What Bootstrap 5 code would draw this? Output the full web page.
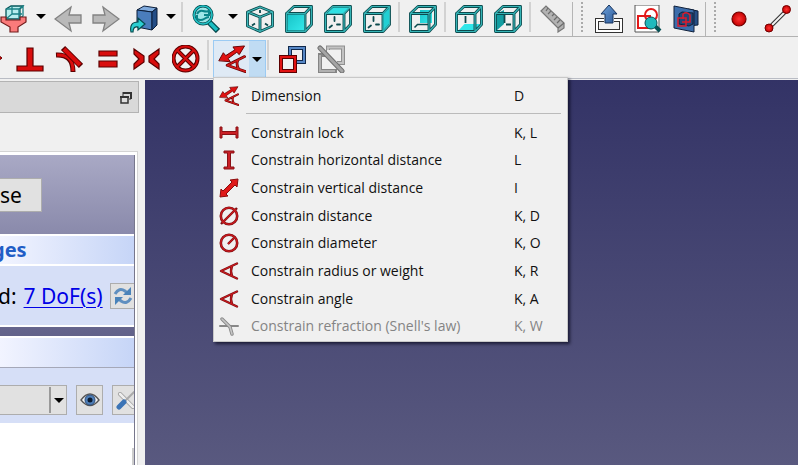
<!DOCTYPE html>
<html lang="en">
<head>
<meta charset="utf-8">
<meta name="viewport" content="width=device-width, initial-scale=1">
<title>Sketcher constraints</title>
<link href="https://cdn.jsdelivr.net/npm/bootstrap@5.3.0/dist/css/bootstrap.min.css" rel="stylesheet">
<style>
body{background:#f0f0f0;color:#000;font-family:"Open Sans","Noto Sans",sans-serif;font-size:14px}
svg{display:block;flex:none}
button{border:0;background:none;padding:0;color:inherit}
.bar-a{height:37px;border-bottom:1px solid #b2b2b2;padding-top:2px}
.bar-b{height:42px;border-bottom:1px solid #b9bcc4;padding-top:3px}
.tool-gap{gap:11px}
.nav-gap{gap:10px}
.b-cells{height:37px}
.part-icon{margin-right:12px}
.arrow-btn{width:18px;height:28px;margin:0 4px;display:flex;align-items:center;justify-content:center}
.arrow-btn::after,.tri::after{content:"";border:5px solid transparent;border-top-color:#000;border-bottom:0}
.rule-v{width:18px;height:30px;padding-left:7px}
.rule-v::before{content:"";display:block;width:2px;height:30px;background:#d2d2d2}
.rule-tight{width:12px;padding-left:1px}
.rule-mid{width:13px}
.grip{width:2px;height:30px;border-left:2px dotted #aaa}
.edge{width:1px;height:34px;background:#b5b5b5}
.split-on{width:53px;height:38px;background:#dfeaf5;border:1px solid #9ccbf3}
.split-on .drop-part{width:16px;background:#c0dcf3}
.cons-menu{width:355px;top:100%;left:-1px;margin:0;padding:4px 4px 1px;border:1px solid #c8c8c8;border-radius:0;background:#f0f0f0;box-shadow:2px 2px 3px rgba(0,0,20,.65);font-size:14px}
.cons-menu .dropdown-item{display:flex;align-items:center;gap:12px;padding:0 10px 0 1px;line-height:20px;color:#111}
.cons-menu .dropdown-item:disabled{color:#848484}
.cons-menu .key{width:39px}
.cons-menu .top-item{height:28px}
.cons-menu .dropdown-divider{margin:3px 2px 5px 28px;border-color:#bbb}
.cons-list{display:grid;grid-auto-rows:1fr;min-height:221px}
.work{min-height:386px}
.dock{width:145px;padding-top:2px;font-family:"Noto Sans","Open Sans",sans-serif;font-size:21px;line-height:24px;white-space:nowrap}
.dock-title{height:32px;margin-right:6px;background:#d9d9d9;border:1px solid #b3b3b3;border-left:0;padding-right:6px}
.dock-frame{margin:38px 7px 0 0;border:1px solid #d4d4d4;border-left:0;border-bottom:0;padding:3px 2px 0 0;background:#fff}
.task{border-right:1px solid #77778c;background:linear-gradient(#a9a9c5,#62628a 180px);overflow:hidden}
.close-row{height:79px;padding-top:23px}
.close-btn{width:42px;height:34px;background:#e1e1e1;border:1px solid #adadad;border-left:0;text-align:left}
.sec-head{height:32px;border-top:2px solid #fff;border-bottom:2px solid #fff;background:linear-gradient(90deg,#f2f4ff,#c6d5f7);color:#215dc6;font-size:20px;font-weight:700;line-height:28px}
.sec-head span{margin-left:-8px}
.sec-two{margin-top:9px;border-bottom:1px solid #a5a8b8}
.sec-body{background:#d6dff7;border-bottom:2px solid #fff}
.dof{height:61px;gap:7px}
.dof span{margin-left:-2px}
.dof a{color:#0000e6;text-underline-offset:3px;text-decoration-thickness:1px}
.pad-btn{width:27px;height:30px;border:1px solid #adadad;background:#e1e1e1;flex:none;display:flex;align-items:center;justify-content:center}
.pad-low{height:26px}
.filter-row{height:57px;gap:9px;padding-bottom:4px}
.combo{width:67px;height:30px;border:1px solid #adadad;border-left:0;background:#e1e1e1;flex:none}
.combo .tri{width:17px;height:26px;border-left:2px solid #999}
.elements{min-height:41px;background:#fff;padding-top:23px}
.elements::after{content:"";display:block;width:2px;min-height:18px;background:#cdcdcd;margin-left:auto}
.view3d{background:linear-gradient(#333366,#59597f);border-top:1px solid #f0f0f0}
</style>
<script src="https://cdn.jsdelivr.net/npm/bootstrap@5.3.0/dist/js/bootstrap.bundle.min.js"></script>
</head>
<body>
<svg width="0" height="0" class="position-absolute" aria-hidden="true">
<defs>
<linearGradient id="gTeal" x2="1" y2="1"><stop stop-color="#18c4c8"/><stop offset="1" stop-color="#34e8ea"/></linearGradient>
<linearGradient id="gBlue" x2="1" y2="1"><stop stop-color="#6fa3dc"/><stop offset="1" stop-color="#2a5796"/></linearGradient>
<radialGradient id="gRed"><stop stop-color="#f33"/><stop offset="1" stop-color="#c40000"/></radialGradient>
<path id="wire" d="M1.500 8.500H20V26.500H1.500ZM1.500 8.500 9 1.500H26.500V19.500L20 26.500M20 8.500 26.500 1.500"/>
<g id="frame" fill="none" stroke-linejoin="round"><use href="#wire" stroke="#0b4a4d" stroke-width="2.9"/><use href="#wire" stroke="#35b4b6" stroke-width="1.2"/></g>
<g id="ticks" fill="none" stroke="#0b4a4d" stroke-width="1.8" stroke-linecap="round"><path d="M10.500 12V16M5.500 22.500 8 20.500M13 19.500H16"/></g>
<g id="ang" fill="none" stroke-linecap="round" stroke-linejoin="round"><path d="M18 2.500 2 10 18 17.500M13 5Q11 10 13 15" stroke="#7a0e10" stroke-width="2.4"/><path d="M18 2.500 2 10 18 17.500M13 5Q11 10 13 15" stroke="#c8191e" stroke-width="1.2"/></g>
<g id="dimen" stroke-linejoin="round" stroke-linecap="round"><path d="M0.500 16 5 8 7.500 11 17 5 15 2 27 1 21.500 10 19 7.500 10 14 12 17Z" fill="#e01212" stroke="#650000"/><g fill="none"><path d="M27 12 9 21 28 27.500M20 16Q18 20 21 25" stroke="#650000" stroke-width="2.900"/><path d="M27 12 9 21 28 27.500M20 16Q18 20 21 25" stroke="#d31c1c" stroke-width="1.500"/></g></g>
</defs>
</svg>

<header>
<div class="bar-a d-flex" role="toolbar" aria-label="View">
  <button aria-label="Selection filter"><svg width="28" height="28"><path d="M6 4 11 1H23L20 4V14H6Z" fill="#b7eeee" stroke="#06565a" stroke-width="1.3"/><path d="M6 4H19V14M19 4 23 1V11L19 14M12 1V9L6 14M12 9H22" fill="none" stroke="#1a8185" stroke-width="1.3"/><path d="M1 12H6V15H20V12H26V17L18 22V27H10V22L1 17Z" fill="#fa7b7b" stroke="#701c1c" stroke-width="1.2"/></svg></button>
  <button class="arrow-btn" aria-label="Filter options"></button>
  <div class="d-flex nav-gap">
    <button aria-label="Back"><svg width="28" height="28"><path d="M1 14 17 2 15 10H27V18H15L17 26Z" fill="#b9b9b9" stroke="#828282" stroke-width="1.3"/></svg></button>
    <button aria-label="Forward"><svg width="28" height="28"><path d="M27 14 11 2 13 10H1V18H13L11 26Z" fill="#b9b9b9" stroke="#828282" stroke-width="1.3"/></svg></button>
    <button aria-label="Go to linked object"><svg width="28" height="28"><path d="M7 5 14 1 27 3 22 7Z" fill="#7faadd" stroke="#0b1d38"/><path d="M7 5 22 7V25L7 22Z" fill="#4a7dbc" stroke="#0b1d38"/><path d="M22 7 27 3V20L22 25Z" fill="#234d86" stroke="#0b1d38"/><path d="M1 27Q-1 17 8 17V13L15 19 8 25V22Q3 21 3 27Z" fill="#2ccfd2" stroke="#064a4d" stroke-width="1.2"/></svg></button>
  </div>
  <button class="arrow-btn me-0" aria-label="Link options"></button>
  <div class="rule-v rule-tight"></div>
  <button aria-label="Fit all"><svg width="28" height="28"><path d="M17 17 26 26" stroke="#06494d" stroke-width="6"/><path d="M17 17 25 25" stroke="#1dbfc3" stroke-width="3.5"/><circle cx="11" cy="10" r="9" fill="#9ee6e8" stroke="#06494d" stroke-width="3"/><circle cx="11" cy="10" r="9" fill="none" stroke="#22c3c7" stroke-width="1.6"/><path d="M5 9Q7 5 11 6T17 6V10H12M5 10V14Q9 16 12 14T17 12" fill="none" stroke="#0a858a" stroke-width="2"/></svg></button>
  <button class="arrow-btn" aria-label="Fit options"></button>
  <div class="d-flex tool-gap">
    <button aria-label="Isometric"><svg width="28" height="28" fill="none" stroke-linejoin="round"><path d="M14 2 26.500 7V21L14 26.500 1.500 21V7ZM1.500 7 14 12 26.500 7M14 12V26" stroke="#0b4a4d" stroke-width="2.9"/><path d="M14 2 26.500 7V21L14 26.500 1.500 21V7ZM1.500 7 14 12 26.500 7M14 12V26" stroke="#3fbbbd" stroke-width="1.2"/><path d="M6 20.500 9 18.500M19 18.500 22 20.500M14 5V8" stroke="#0b4a4d" stroke-width="1.800"/></svg></button>
    <button aria-label="Front"><svg width="28" height="28"><use href="#frame"/><path d="M2.500 9.500H19V25.500H2.500Z" fill="url(#gTeal)"/></svg></button>
    <button aria-label="Top"><svg width="28" height="28"><use href="#frame"/><use href="#ticks"/><path d="M3.500 8 9.500 2.500H25L19.500 8Z" fill="#2fe0e3"/></svg></button>
    <button aria-label="Right"><svg width="28" height="28"><use href="#ticks"/><use href="#frame"/><path d="M20.500 9 26 3.500V19L20.500 25Z" fill="#22cfd3"/></svg></button>
  </div>
  <div class="rule-v"></div>
  <button aria-label="Rear"><svg width="28" height="28"><path d="M11 5H23V18H11Z" fill="url(#gTeal)"/><path d="M5.500 22.500 8.500 19.500H19" fill="none" stroke="#0b4a4d" stroke-width="1.500"/><use href="#frame"/></svg></button>
  <div class="rule-v"></div>
  <div class="d-flex tool-gap">
    <button aria-label="Bottom"><svg width="28" height="28"><path d="M3 26 9.500 19H25L20 26Z" fill="#2fe6e9"/><path d="M10.500 11V18" stroke="#0b4a4d" stroke-width="1.800" fill="none"/><use href="#frame"/></svg></button>
    <button aria-label="Left"><svg width="28" height="28"><path d="M2 9 10 5V19L2 26Z" fill="#129da1"/><path d="M10.500 10V18M12 19.500H17" stroke="#0b4a4d" stroke-width="1.800"/><use href="#frame"/></svg></button>
  </div>
  <div class="rule-v"></div>
  <button aria-label="Measure"><svg width="28" height="28"><path d="M1 6 6 1 24 18V23L18 27V23Z" fill="#b2b2b2" stroke="#777" stroke-width="1.2"/><path d="M18 23 24 18M8 3 6 6M11 6 8 9M14 9 12 11M17 12 14 15M20 15 17 18" stroke="#6c6c6c" stroke-width="1.2"/></svg></button>
  <div class="edge ms-1 me-1"></div><div class="grip ms-1 me-1"></div>
  <div class="d-flex tool-gap ms-2">
    <button aria-label="Leave sketch"><svg width="28" height="28"><path d="M9 15H2V26H26V15H19" fill="none" stroke="#333" stroke-width="4"/><path d="M9 15H2V26H26V15H19" fill="none" stroke="#fff" stroke-width="2"/><path d="M14 0 22 9H18V18H10V9H6Z" fill="url(#gBlue)" stroke="#17335c"/></svg></button>
    <button aria-label="View sketch"><svg width="28" height="28"><path d="M1 0H25V27H1Z" fill="#fff" stroke="#555"/><path d="M4 11H16V23H4Z" fill="none" stroke="#e21a1a" stroke-width="2"/><circle cx="17" cy="10" r="6" fill="none" stroke="#e21a1a" stroke-width="2"/><path d="M20 20 26 26" stroke="#075256" stroke-width="4"/><circle cx="17" cy="18" r="6" fill="#20b9bd" stroke="#075256"/></svg></button>
    <button aria-label="View section"><svg width="28" height="28"><path d="M15 4 25 6V20L15 21Z" fill="#264f86" stroke="#10213b"/><path d="M1 1 21 5V27L1 23Z" fill="#3c6dab" stroke="#10213b"/><path d="M6 9 9 7 20 8V19L16 21 6 19Z" fill="#234777" stroke="#10213b"/><path d="M5 13H13V21H5ZM10 14V9Q14 6 17 10V17H9" fill="none" stroke="#dc1b2d" stroke-width="1.500"/></svg></button>
  </div>
  <div class="edge ms-1 me-1"></div><div class="grip ms-1 me-2"></div>
  <div class="d-flex tool-gap">
    <button aria-label="Point"><svg width="28" height="28"><circle cx="15" cy="14" r="7" fill="url(#gRed)" stroke="#720000" stroke-width="1.2"/></svg></button>
    <button aria-label="Line"><svg width="28" height="28"><path d="M6 23 24 5" stroke="#333" stroke-width="4"/><path d="M6 23 24 5" stroke="#f5f5f5" stroke-width="2"/><circle cx="6" cy="23" r="4" fill="url(#gRed)" stroke="#720000"/><circle cx="23.500" cy="4.500" r="4" fill="url(#gRed)" stroke="#720000"/></svg></button>
  </div>
</div>

<div class="bar-b d-flex" role="toolbar" aria-label="Constraints">
  <svg class="part-icon" width="4" height="37"><path d="M-3 14 2 18-3 22Z" fill="#d40000" stroke="#600"/></svg>
  <div class="d-flex tool-gap align-items-center b-cells">
    <button aria-label="Perpendicular"><svg width="28" height="28"><path d="M11 3H17V21H27V26H1V21H11Z" fill="#d90d0d" stroke="#5c0000" stroke-width="1.2"/></svg></button>
    <button aria-label="Tangent"><svg width="28" height="28" fill="none"><path d="M1 10Q18 9 18 27" stroke="#5c0000" stroke-width="5"/><path d="M2 10Q18 9 18 26" stroke="#d90d0d" stroke-width="3"/><path d="M8 3 26 21" stroke="#5c0000" stroke-width="6"/><path d="M9 4 25 20" stroke="#d90d0d" stroke-width="4"/></svg></button>
    <button aria-label="Equal"><svg width="28" height="28" fill="#d90d0d" stroke="#5c0000" stroke-width="1.2"><path d="M5 6H23V11H5ZM5 16H23V22H5Z"/></svg></button>
    <button aria-label="Symmetric"><svg width="28" height="28" fill="#d90d0d" stroke="#5c0000" stroke-width="1.2"><path d="M1 4 11 11V17L1 24V19L6 14 1 9ZM26 4 16 11V17L26 24V19L21 14 26 9Z"/></svg></button>
    <button aria-label="Block"><svg width="28" height="28" fill="none"><path d="M5 5 22 22M22 5 5 22" stroke="#5c0000" stroke-width="4"/><circle cx="13.500" cy="13.500" r="12" stroke="#5c0000" stroke-width="4"/><circle cx="13.500" cy="13.500" r="12" stroke="#d90d0d" stroke-width="2"/><path d="M5 5 22 22M22 5 5 22" stroke="#d90d0d" stroke-width="2"/></svg></button>
  </div>
  <div class="rule-v rule-mid"></div>
  <div class="dropdown split-on d-flex">
    <button class="flex-grow-1" aria-label="Dimension tool"><svg class="mx-auto" width="28" height="28" viewBox="0 0 28 29"><use href="#dimen"/></svg></button>
    <button class="drop-part tri d-flex align-items-center justify-content-center" data-bs-toggle="dropdown" aria-expanded="true" aria-label="Dimension menu"></button>
    <div class="dropdown-menu cons-menu show">
      <button class="dropdown-item top-item"><svg width="20" height="20" viewBox="0 0 28 29"><use href="#dimen"/></svg><span class="flex-grow-1">Dimension</span><span class="key">D</span></button>
      <hr class="dropdown-divider">
      <div class="cons-list">
      <button class="dropdown-item"><svg width="20" height="20"><path d="M1 4H3V8.500H17V4H19V15H17V11.500H3V15H1Z" fill="#cb2026" stroke="#8a1014"/></svg><span class="flex-grow-1">Constrain lock</span><span class="key">K, L</span></button>
      <button class="dropdown-item"><svg width="20" height="20"><path d="M5 1H15V3H11.500V17H15V19H5V17H8.500V3H5Z" fill="#cb2026" stroke="#8a1014"/></svg><span class="flex-grow-1">Constrain horizontal distance</span><span class="key">L</span></button>
      <button class="dropdown-item"><svg width="20" height="20"><path d="M1 19 2 11 4 13 13 4 11 2 19 1 18 9 16 7 7 16 9 18Z" fill="#e01919" stroke="#8b0c0c"/></svg><span class="flex-grow-1">Constrain vertical distance</span><span class="key">I</span></button>
      <button class="dropdown-item"><svg width="20" height="20" fill="none"><path d="M2 18 18 2" stroke="#7a0e10" stroke-width="2.400"/><circle cx="10" cy="10" r="8.200" stroke="#7a0e10" stroke-width="2.600"/><circle cx="10" cy="10" r="8.200" stroke="#c8191e" stroke-width="1.400"/><path d="M3 17 17 3" stroke="#c8191e" stroke-width="1.200"/></svg><span class="flex-grow-1">Constrain distance</span><span class="key">K, D</span></button>
      <button class="dropdown-item"><svg width="20" height="20" fill="none"><circle cx="10" cy="10" r="8.200" stroke="#7a0e10" stroke-width="2.600"/><circle cx="10" cy="10" r="8.200" stroke="#c8191e" stroke-width="1.400"/><path d="M9 11 15 5" stroke="#7a0e10" stroke-width="2.400"/><path d="M9 11 15 5" stroke="#c8191e" stroke-width="1.200"/></svg><span class="flex-grow-1">Constrain diameter</span><span class="key">K, O</span></button>
      <button class="dropdown-item"><svg width="20" height="20"><use href="#ang"/></svg><span class="flex-grow-1">Constrain radius or weight</span><span class="key">K, R</span></button>
      <button class="dropdown-item"><svg width="20" height="20"><use href="#ang"/></svg><span class="flex-grow-1">Constrain angle</span><span class="key">K, A</span></button>
      <button class="dropdown-item" disabled><svg width="20" height="20" fill="none" stroke-linecap="round"><path d="M1 10H19" stroke="#888" stroke-width="2"/><path d="M3 3 11 11 13 18" stroke="#888" stroke-width="3.400"/><path d="M3 3 11 11 13 18" stroke="#c6c6c6" stroke-width="1.600"/></svg><span class="flex-grow-1">Constrain refraction (Snell's law)</span><span class="key">K, W</span></button>
      </div>
    </div>
  </div>
  <div class="rule-v rule-tight"></div>
  <div class="d-flex tool-gap align-items-center b-cells">
    <button aria-label="Toggle driving"><svg width="28" height="28" fill="none"><path d="M12 3H26V17H12Z" stroke="#10284a" stroke-width="4"/><path d="M12 3H26V17H12Z" stroke="#5687c6" stroke-width="2"/><path d="M3 12H17V26H3Z" fill="#f0f0f0" stroke="#5c0000" stroke-width="4"/><path d="M3 12H17V26H3Z" stroke="#e01212" stroke-width="2"/></svg></button>
    <button aria-label="Toggle active"><svg width="28" height="28" fill="none"><path d="M11 2.500H26V18H11Z" stroke="#8f8f8f" stroke-width="4"/><path d="M11 2.500H26V18H11Z" stroke="#c2c2c2" stroke-width="2"/><path d="M3 10H18V26H3Z" fill="#f0f0f0" stroke="#858585" stroke-width="4"/><path d="M10 5H24V16H20V24H5V12H10Z" fill="#f0f0f0"/><path d="M3 10V26H18" stroke="#b0b0b0" stroke-width="2"/><path d="M3 3 25 26" stroke="#707070" stroke-width="5" stroke-linecap="round"/><path d="M3 3 25 26" stroke="#a5a5a5" stroke-width="3" stroke-linecap="round"/></svg></button>
  </div>
</div>
</header>

<main class="work d-flex">
  <aside class="dock flex-shrink-0 overflow-hidden d-flex flex-column">
    <div class="dock-title d-flex align-items-center justify-content-end flex-shrink-0"><button aria-label="Float panel"><svg width="12" height="13" fill="none" stroke="#333"><path d="M3 2H11V8" stroke-width="2"/><path d="M3 1V5M9 8H11" /><path d="M1 6H8V12H1Z" stroke-width="1.500" fill="#ddd"/><path d="M0 6H9" stroke-width="2"/></svg></button></div>
    <div class="dock-frame flex-grow-1">
      <div class="task">
        <div class="close-row"><button class="close-btn">se</button></div>
        <div class="sec-head"><span>ges</span></div>
        <div class="sec-body dof d-flex align-items-center"><span>d:</span><a href="#dof">7 DoF(s)</a><button class="pad-btn pad-low" aria-label="Update"><svg width="20" height="20" fill="none" stroke="#5f8fc0" stroke-width="3"><path d="M2 8Q6 1 12 5L14 7"/><path d="M18 1V9H10Z" fill="#4a83ba" stroke="none"/><path d="M18 12Q14 19 8 15L6 13"/><path d="M2 19V11H10Z" fill="#4a83ba" stroke="none"/></svg></button></div>
        <div class="sec-head sec-two"></div>
        <div class="sec-body filter-row d-flex align-items-end"><div class="combo d-flex align-items-center justify-content-end mb-1"><button class="tri d-flex align-items-center justify-content-center" aria-label="Element filter"></button></div>
          <button class="pad-btn mb-1" aria-label="Visibility"><svg width="20" height="16"><path d="M1 8Q10-4 19 8 10 19 1 8Z" fill="#f4f4f4" stroke="#555" stroke-width="1.300"/><circle cx="10" cy="8" r="5" fill="#4f7fb8" stroke="#294d7d"/><circle cx="10" cy="8" r="2.500" fill="#0b1b30"/></svg></button>
          <button class="pad-btn mb-1" aria-label="Settings"><svg width="20" height="20" fill="none" stroke-linecap="round"><path d="M4 4 17 17" stroke="#999" stroke-width="4"/><path d="M4 4 17 17" stroke="#eee" stroke-width="2.500"/><path d="M10 10 18 2" stroke="#aaa" stroke-width="2"/><path d="M3 17 8 12" stroke="#3b74b6" stroke-width="5"/></svg></button></div>
        <div class="elements"></div>
      </div>
    </div>
  </aside>
  <section class="view3d flex-grow-1" aria-label="3D view"></section>
</main>
</body>
</html>
